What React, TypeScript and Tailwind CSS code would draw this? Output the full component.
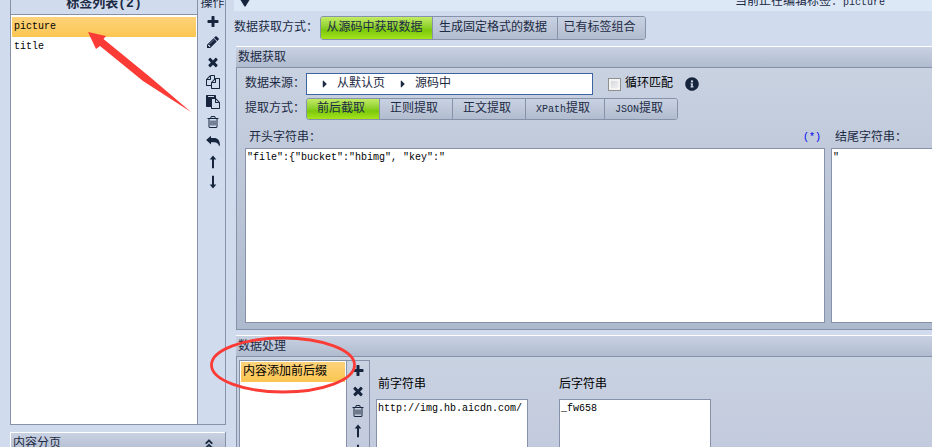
import type { ReactNode } from 'react'
import { FaAngleDoubleUp, FaCaretRight, FaInfoCircle } from 'react-icons/fa'

interface IconProps {
  name: string;
}

interface ToolbarProps {
  icons: string[];
}

interface SegmentedProps {
  label: string;
  items: Segment[];
  active: string;
}

interface Segment {
  id: string;
  text: ReactNode;
  className: string;
}

const iconPaths: Record<string, string> = {
  add: 'M1600 736v192q0 40-28 68t-68 28h-416v416q0 40-28 68t-68 28h-192q-40 0-68-28t-28-68v-416h-416q-40 0-68-28t-28-68v-192q0-40 28-68t68-28h416v-416q0-40 28-68t68-28h192q40 0 68 28t28 68v416h416q40 0 68 28t28 68z',
  edit: 'M491 1536l91-91-235-235-91 91v107h128v128h107zm523-928q0-22-22-22-10 0-17 7l-542 542q-7 7-7 17 0 22 22 22 10 0 17-7l542-542q7-7 7-17zm-54-192l416 416-832 832h-416v-416zm683 96q0 53-37 90l-166 166-416-416 166-165q36-38 90-38 53 0 91 38l235 234q37 39 37 91z',
  remove: 'M1490 1322q0 40-28 68l-136 136q-28 28-68 28t-68-28l-294-294-294 294q-28 28-68 28t-68-28l-136-136q-28-28-28-68t28-68l294-294-294-294q-28-28-28-68t28-68l136-136q28-28 68-28t68 28l294 294 294-294q28-28 68-28t68 28l136 136q28 28 28 68t-28 68l-294 294 294 294q28 28 28 68z',
  copy: 'M1696 384q40 0 68 28t28 68v1216q0 40-28 68t-68 28h-960q-40 0-68-28t-28-68v-288h-544q-40 0-68-28t-28-68v-672q0-40 20-88t48-76l408-408q28-28 76-48t88-20h416q40 0 68 28t28 68v328q68-40 128-40h416zm-544 213l-299 299h299v-299zm-640-384l-299 299h299v-299zm196 647l316-316v-416h-384v416q0 40-28 68t-68 28h-416v640h512v-256q0-40 20-88t48-76zm956 804v-1152h-384v416q0 40-28 68t-68 28h-416v640h896z',
  paste: 'M768 1664h896v-640h-416q-40 0-68-28t-28-68v-416h-384v1152zm256-1440v-64q0-13-9.500-22.500t-22.500-9.500h-704q-13 0-22.500 9.500t-9.500 22.500v64q0 13 9.500 22.500t22.500 9.500h704q13 0 22.500-9.500t9.500-22.500zm256 672h299l-299-299v299zm512 128v672q0 40-28 68t-68 28h-960q-40 0-68-28t-28-68v-160h-544q-40 0-68-28t-28-68v-1344q0-40 28-68t68-28h1088q40 0 68 28t28 68v328q21 13 36 28l408 408q28 28 48 76t20 88z',
  clear: 'M704 736v576q0 14-9 23t-23 9h-64q-14 0-23-9t-9-23v-576q0-14 9-23t23-9h64q14 0 23 9t9 23zm256 0v576q0 14-9 23t-23 9h-64q-14 0-23-9t-9-23v-576q0-14 9-23t23-9h64q14 0 23 9t9 23zm256 0v576q0 14-9 23t-23 9h-64q-14 0-23-9t-9-23v-576q0-14 9-23t23-9h64q14 0 23 9t9 23zm128 724v-948h-896v948q0 22 7 40.500t14.500 27 10.500 8.500h832q3 0 10.500-8.500t14.500-27 7-40.500zm-672-1076h448l-48-117q-7-9-17-11h-317q-10 2-17 11zm928 32v64q0 14-9 23t-23 9h-96v948q0 83-47 143.500t-113 60.500h-832q-66 0-113-58.500t-47-141.500v-952h-96q-14 0-23-9t-9-23v-64q0-14 9-23t23-9h309l70-167q15-37 54-63t79-26h320q40 0 79 26t54 63l70 167h309q14 0 23 9t9 23z',
  undo: 'M20 640L640 90v300h400c450 0 740 300 740 900l-90 190c-70-350-270-560-650-560H640v290z',
  up: 'M896 60L1320 580H1024V1700H768V580H472z',
  down: 'M896 1730L472 1210H768V90H1024V1210H1320z',
}

const tagTools = ['add', 'edit', 'remove', 'copy', 'paste', 'clear', 'undo', 'up', 'down']
const processTools = ['add', 'remove', 'clear', 'up', 'down']

const sourceModes: Segment[] = [
  { id: 'source', text: '从源码中获取数据', className: 'w-[112px]' },
  { id: 'fixed', text: '生成固定格式的数据', className: 'w-[125px]' },
  { id: 'combine', text: '已有标签组合', className: 'w-[87px]' },
]

const extractModes: Segment[] = [
  { id: 'cut', text: '前后截取', className: 'w-[73px]' },
  { id: 'regex', text: '正则提取', className: 'w-[73px]' },
  { id: 'body', text: '正文提取', className: 'w-[73px]' },
  { id: 'xpath', text: <><Latin>XPath</Latin>提取</>, className: 'w-[79px]' },
  { id: 'json', text: <><Latin>JSON</Latin>提取</>, className: 'w-[72px]' },
]

function Latin({ children }: { children: ReactNode }) {
  return <span className="text-[10px]">{children}</span>
}

function Icon({ name }: IconProps) {
  return (
    <svg viewBox="0 0 1792 1792" className="size-3.5 fill-[#16243d]" aria-hidden="true">
      <path d={iconPaths[name]} />
    </svg>
  )
}

function Toolbar({ icons }: ToolbarProps) {
  return (
    <div className="flex flex-col items-center">
      {icons.map((name) => (
        <button key={name} aria-label={name} className="flex h-5 w-6 shrink-0 items-center justify-center">
          <Icon name={name} />
        </button>
      ))}
    </div>
  )
}

function Segmented({ label, items, active }: SegmentedProps) {
  return (
    <div role="group" aria-label={label} className="flex h-full overflow-hidden rounded-[3px] border border-[#8592aa]">
      {items.map((item) => (
        <button
          key={item.id}
          aria-pressed={item.id === active}
          className={`${item.className} border-r border-[#8592aa] pr-1 whitespace-nowrap last:border-r-0 ${
            item.id === active
              ? 'bg-linear-to-b from-[#c3ec62] via-[#7cc80a] via-60% to-[#a4e51c]'
              : 'bg-linear-to-b from-[#c9d2e2] to-[#b1bccf]'
          }`}
        >
          {item.text}
        </button>
      ))}
    </div>
  )
}

function PanelHeader({ children }: { children: ReactNode }) {
  return (
    <h2 className="flex h-[22px] shrink-0 items-center justify-between border-t border-b border-t-white border-b-[#8592aa] bg-linear-to-b from-[#c9d2e2] to-[#b0bbcf] pt-px pl-0.5">
      {children}
    </h2>
  )
}

function Sidebar() {
  return (
    <aside className="flex w-[216px] shrink-0 flex-col gap-[7px]">
      <div className="flex min-h-0 flex-1 border-x border-b border-[#8592aa]">
        <div className="flex flex-1 flex-col border-r border-[#8592aa]">
          <h2 className="flex h-[15px] shrink-0 items-end justify-center border-b border-[#8592aa] pb-0.5 text-[13px] leading-4 font-bold">
            标签列表(2)
          </h2>
          <ul className="flex-1 bg-white p-px pt-0.5 text-[10px] text-black">
            <li className="h-5 bg-linear-to-b from-[#fdd27a] to-[#fbc650] pl-0.5 leading-5">picture</li>
            <li className="h-5 pl-0.5 leading-5">title</li>
          </ul>
        </div>
        <div className="w-[27px] pl-0.5">
          <div className="flex h-3 items-end justify-center whitespace-nowrap">操作</div>
          <Toolbar icons={tagTools} />
        </div>
      </div>
      <div className="h-[15px] overflow-hidden border-x border-l-white border-r-[#8592aa]">
        <PanelHeader>
          内容分页
          <FaAngleDoubleUp className="mr-2.5 size-3" />
        </PanelHeader>
      </div>
    </aside>
  )
}

function FetchPanel() {
  return (
    <section>
      <PanelHeader>数据获取</PanelHeader>
      <div className="border-b border-l border-[#8592aa] bg-linear-to-b from-[#c9d2e1] to-[#adb9cd] pt-[5px] pb-1.5 pl-2">
        <div className="flex h-[22px] items-center">
          <span className="w-[61px] whitespace-nowrap">数据来源：</span>
          <div className="flex h-full w-[287px] items-center border border-[#3c64a0] bg-white pl-3">
            <FaCaretRight className="mr-1.5 size-3" />
            <button>从默认页</button>
            <FaCaretRight className="mr-1.5 ml-3 size-3" />
            <button>源码中</button>
          </div>
          <label className="ml-[15px] flex items-center gap-1 text-black">
            <input
              type="checkbox"
              className="size-[13px] appearance-none border border-[#8e8f8f] bg-linear-to-br from-[#cfd2d8] to-[#f6f6f6] outline-2 -outline-offset-3 outline-[#f4f4f4]"
            />
            循环匹配
          </label>
          <FaInfoCircle className="ml-3 size-3.5 fill-[#16243d]" />
        </div>
        <div className="mt-[3px] flex h-[22px] items-center">
          <span className="w-[61px] whitespace-nowrap">提取方式：</span>
          <Segmented label="提取方式" items={extractModes} active="cut" />
        </div>
        <div className="mt-2 flex gap-1.5">
          <div className="flex w-[580px] shrink-0 flex-col">
            <div className="flex h-5 justify-between px-1 leading-5">
              <label htmlFor="start">开头字符串：</label>
              <Latin><span className="text-[#0000f0]">(*)</span></Latin>
            </div>
            <textarea
              id="start"
              defaultValue={'"file":{"bucket":"hbimg", "key":"'}
              className="h-[175px] resize-none border border-[#8592aa] bg-white px-px pt-[3px] text-[10px] leading-3 text-black"
            />
          </div>
          <div className="flex min-w-0 flex-1 flex-col">
            <label htmlFor="end" className="h-5 pl-1 leading-5 whitespace-nowrap">结尾字符串：</label>
            <textarea
              id="end"
              defaultValue={'"'}
              className="h-[175px] resize-none border border-r-0 border-[#8592aa] bg-white px-px pt-[3px] text-[10px] leading-3 text-black"
            />
          </div>
        </div>
      </div>
    </section>
  )
}

function ProcessPanel() {
  return (
    <section className="relative flex min-h-0 flex-1 flex-col">
      <PanelHeader>数据处理</PanelHeader>
      <div className="flex min-h-0 flex-1 overflow-hidden border-l border-[#8592aa] bg-linear-to-b from-[#c9d2e1] to-[#c2cadd] pt-[3px] pl-0.5 text-black">
        <ul className="w-[107px] border-t border-l border-[#8592aa] bg-white p-px">
          <li className="h-5 bg-linear-to-b from-[#fdd27a] to-[#fbc650] pl-0.5 leading-5 whitespace-nowrap">内容添加前后缀</li>
        </ul>
        <div className="w-6 border-x border-t border-[#8592aa]">
          <Toolbar icons={processTools} />
        </div>
        <div className="flex gap-[31px] pt-4 pl-1.5">
          <div className="flex flex-col">
            <label htmlFor="prefix" className="h-[23px] shrink-0 pt-px pl-0.5 leading-4">前字符串</label>
            <textarea
              id="prefix"
              defaultValue="http://img.hb.aicdn.com/"
              className="h-20 w-[152px] shrink-0 resize-none overflow-hidden border border-[#8592aa] bg-white px-px pt-[3px] text-[10px] leading-3"
            />
          </div>
          <div className="flex flex-col">
            <label htmlFor="suffix" className="h-[23px] shrink-0 pt-px leading-4">后字符串</label>
            <textarea
              id="suffix"
              defaultValue="_fw658"
              className="h-20 w-[152px] shrink-0 resize-none overflow-hidden border border-[#8592aa] bg-white px-px pt-[3px] text-[10px] leading-3"
            />
          </div>
        </div>
      </div>
      <svg viewBox="0 0 148 60" className="pointer-events-none absolute top-0 -left-7 h-[60px] w-[148px]" aria-hidden="true">
        <ellipse cx="75" cy="30" rx="71.500" ry="27" fill="none" stroke="#fb3b36" strokeWidth="2.800" />
      </svg>
    </section>
  )
}

export default function App() {
  return (
    <div className="relative flex h-screen gap-2 overflow-hidden bg-[#d0dcee] pl-2.5 font-['Liberation_Mono','Noto_Sans_CJK_SC',monospace] text-xs leading-4 text-[#1c2a44]">
      <Sidebar />
      <main className="flex min-w-0 flex-1 flex-col">
        <header className="flex h-[11px] shrink-0 items-end justify-between bg-[#dce8f6] pr-[47px] pl-1">
          <svg viewBox="0 0 14 12" className="h-3 w-3.5 self-start" aria-hidden="true">
            <path d="M2.500 0h9L7.500 6.500h-1z" className="fill-[#16243d]" />
          </svg>
          <p className="whitespace-nowrap">当前正在编辑标签：<Latin>picture</Latin></p>
        </header>
        <div className="mt-[5px] flex h-6 shrink-0 items-center">
          <span className="w-[86px] whitespace-nowrap">数据获取方式：</span>
          <Segmented label="数据获取方式" items={sourceModes} active="source" />
        </div>
        <div className="mt-1.5 ml-0.5 flex min-h-0 flex-1 flex-col gap-[5px]">
          <FetchPanel />
          <ProcessPanel />
        </div>
      </main>
      <svg viewBox="0 0 104 82" className="pointer-events-none absolute top-8 left-[88px] h-[82px] w-[104px]" aria-hidden="true">
        <path d="M0 0L18 4L15.500 7L62 45L103 80L55 49L12 14L8 17z" fill="#fb3b36" />
      </svg>
    </div>
  )
}
